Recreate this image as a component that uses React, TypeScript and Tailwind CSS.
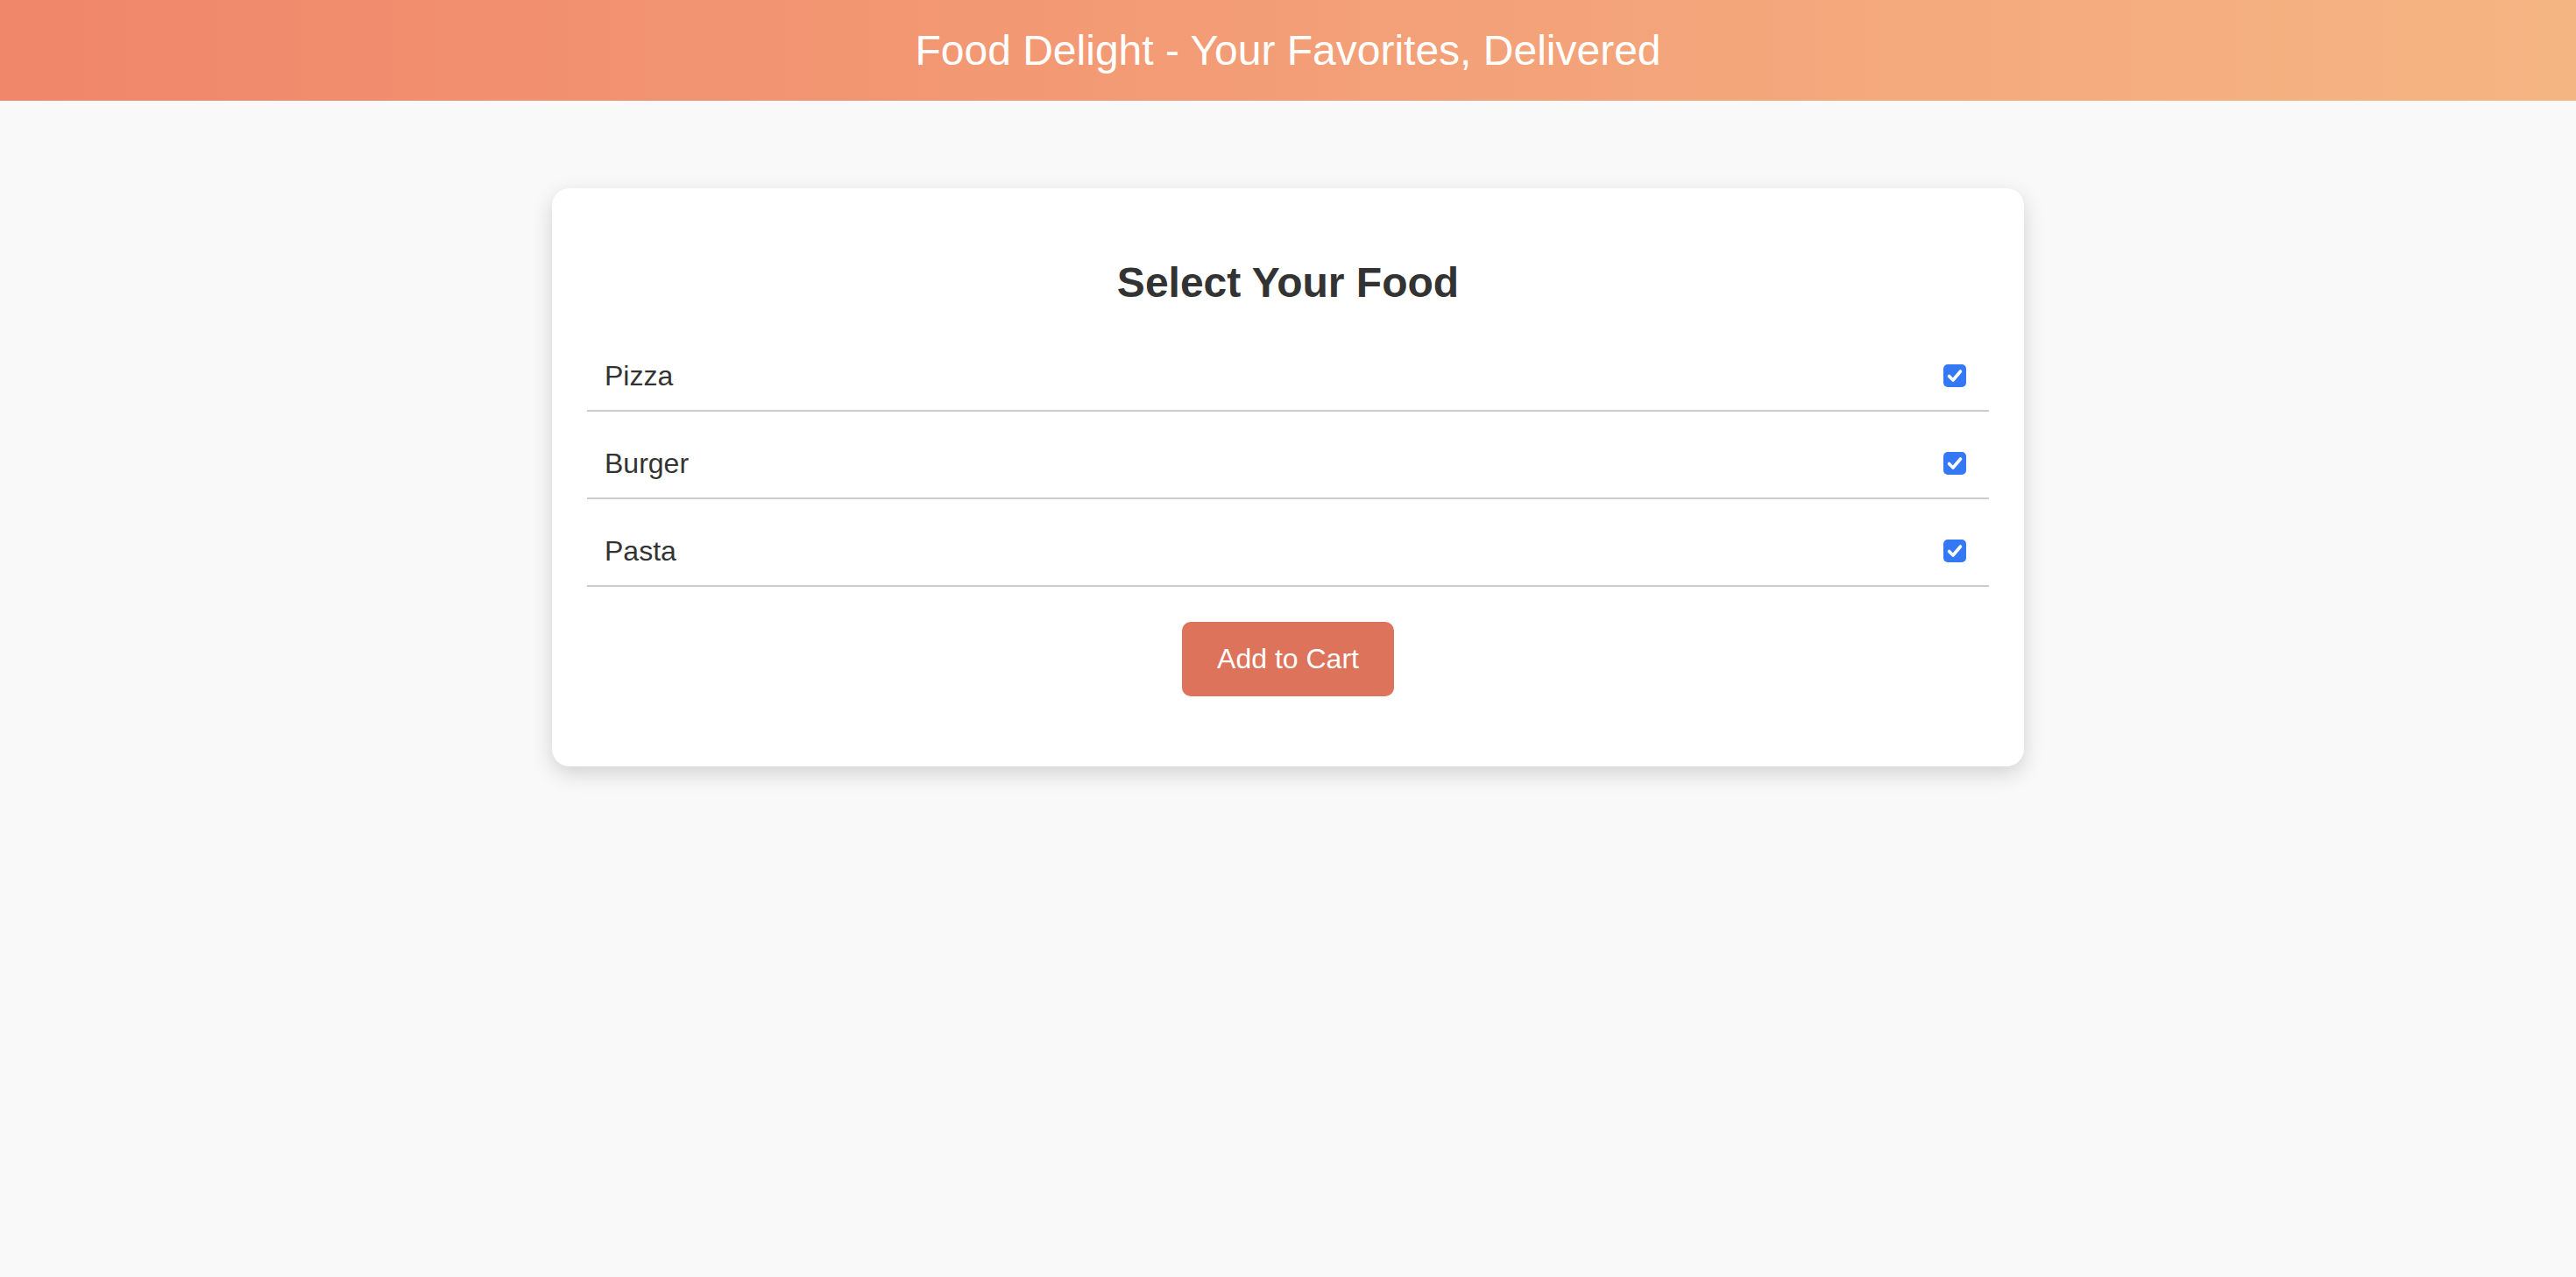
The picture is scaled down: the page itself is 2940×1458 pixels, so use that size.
import React, { useState } from 'react';

const FOODS = ['Pizza', 'Burger', 'Pasta'];

const CheckBox = ({ checked, onChange }: { checked: boolean; onChange: () => void }) => (
  <button
    type="button"
    onClick={onChange}
    className={`my-[6px] ml-[8px] mr-[6px] w-[26px] h-[26px] rounded-[5px] flex items-center justify-center ${
      checked ? 'bg-[#3478f6]' : 'bg-white border-2 border-[#767676]'
    }`}
  >
    {checked && (
      <svg width="22" height="22" viewBox="0 0 22 22" fill="none">
        <path d="M4.5 11.5l4.5 4.5 8.5-10" stroke="white" strokeWidth="3.6" strokeLinecap="round" strokeLinejoin="round" />
      </svg>
    )}
  </button>
);

export default function App() {
  const [selected, setSelected] = useState<Record<string, boolean>>({ Pizza: true, Burger: true, Pasta: true });

  const toggle = (name: string) => setSelected((s) => ({ ...s, [name]: !s[name] }));

  return (
    <div className="min-h-screen bg-[#f9f9f9] font-['Liberation_Sans',Arial,sans-serif]">
      {/* Header */}
      <header className="bg-gradient-to-r from-[#f0866a] to-[#f5b583] py-[30px] text-center">
        <h1 className="text-[48px] leading-[1.15] text-white font-normal">Food Delight - Your Favorites, Delivered</h1>
      </header>

      {/* Card */}
      <main className="flex justify-center pt-[100px]">
        <div className="w-[1680px] bg-white rounded-[20px] shadow-[0_8px_24px_rgba(0,0,0,0.16)] px-[40px] pt-[40px] pb-[80px]">
          <h2 className="text-[48px] leading-[1.15] font-bold text-[#333] text-center mt-[40px] mb-[40px]">Select Your Food</h2>

          <div className="flex flex-col">
            {FOODS.map((food) => (
              <div
                key={food}
                className="flex items-center justify-between py-[20px] px-[20px] mb-[20px] border-b-2 border-[#cccccc]"
              >
                <span className="text-[32px] leading-[1.15] text-[#333]">{food}</span>
                <CheckBox checked={!!selected[food]} onChange={() => toggle(food)} />
              </div>
            ))}
          </div>

          <div className="flex justify-center mt-[20px]">
            <button className="bg-[#dc735a] text-white text-[32px] leading-[1.15] px-[40px] py-[24px] rounded-[10px]">
              Add to Cart
            </button>
          </div>
        </div>
      </main>
    </div>
  );
}
